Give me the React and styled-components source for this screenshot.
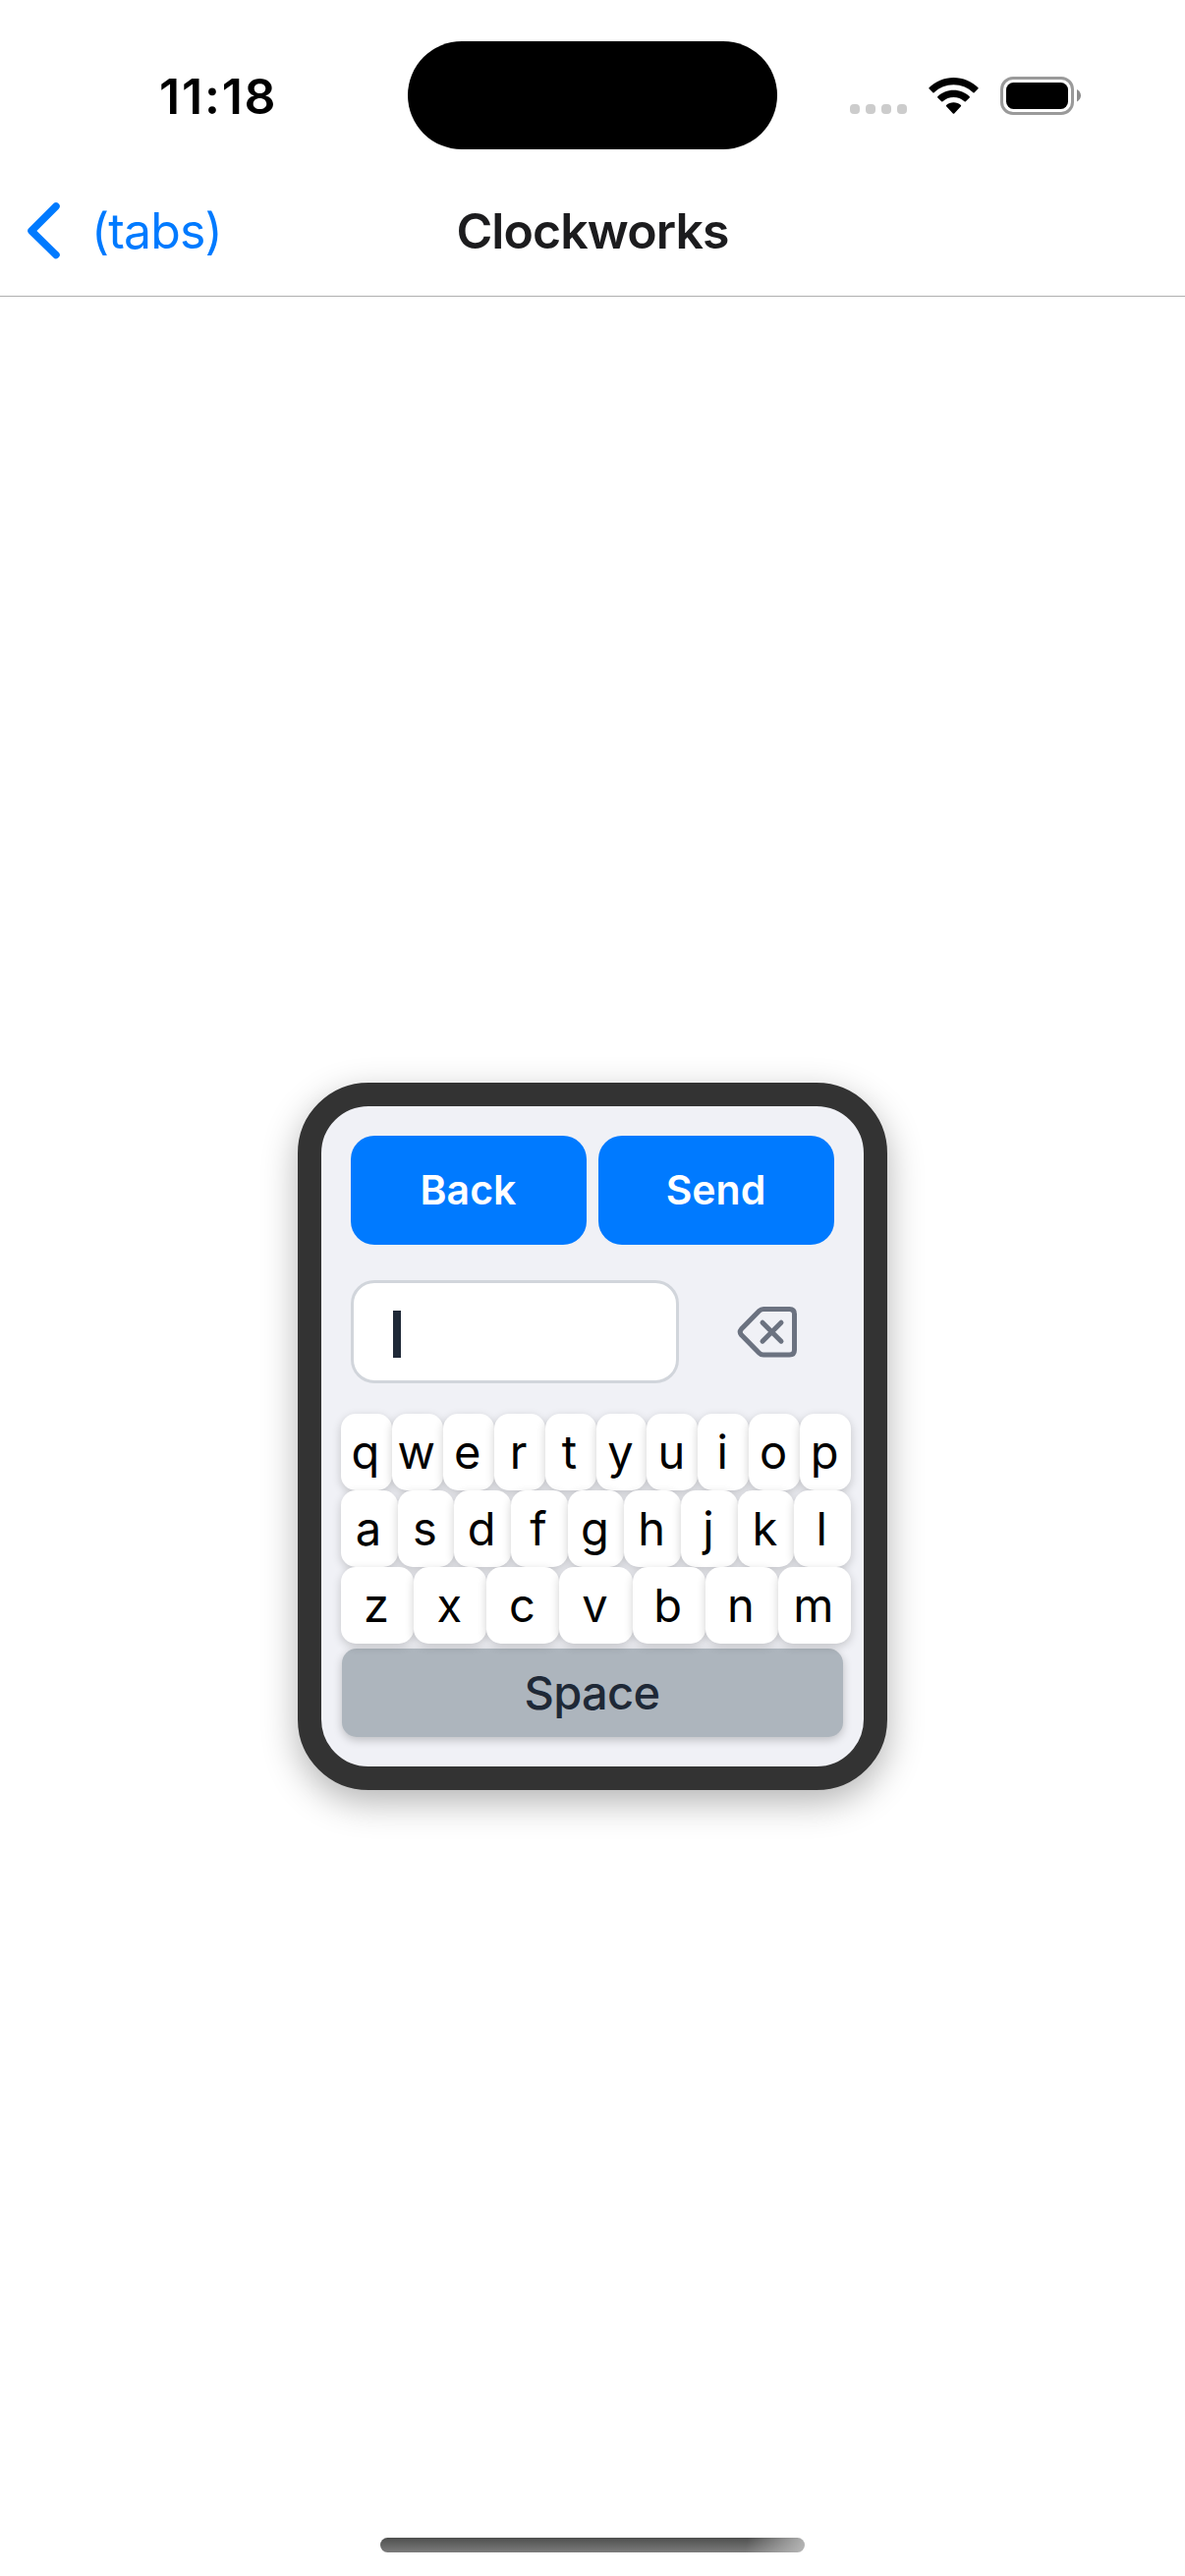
import React from "react";
import styled, { createGlobalStyle } from "styled-components";

const Global = createGlobalStyle`
  * { box-sizing: border-box; }
  html, body, #root { margin: 0; padding: 0; height: 100%; }
  body { background: #fff; font-family: Inter, "Liberation Sans", sans-serif; overflow: hidden; }
  button { border: 0; margin: 0; padding: 0; font: inherit; background: none; }
`;

const Screen = styled.div`
  width: 1206px;
  height: 2622px;
  display: flex;
  flex-direction: column;
  background: #fff;
`;

const StatusBar = styled.header`
  height: 177px;
  padding-top: 42px;
  display: grid;
  grid-template-columns: 415px 376px 1fr;
  align-items: start;
`;

const Time = styled.time`
  padding: 25px 0 0 162px;
  font-size: 50px;
  line-height: 62px;
  font-weight: 600;
  letter-spacing: 1.8px;
  color: #000;
`;

const Island = styled.div`
  height: 110px;
  border-radius: 55px;
  background: #000;
`;

const Indicators = styled.div`
  display: flex;
  align-items: flex-start;
  padding: 36px 0 0 74px;
`;

const Dots = styled.div`
  display: flex;
  gap: 6px;
  margin: 28px 22px 0 0;
`;

const Dot = styled.i`
  width: 10px;
  height: 10px;
  border-radius: 4px;
  background: #ccc;
`;

const WifiGlyph = styled.svg`
  width: 51px;
  height: 37px;
  margin: 1px 22px 0 0;
`;

const BatteryGlyph = styled.svg`
  width: 83px;
  height: 39px;
`;

const NavBar = styled.nav`
  height: 125px;
  border-bottom: 1px solid #b0b0b0;
  display: grid;
  grid-template-columns: 1fr auto 1fr;
  align-items: start;
`;

const BackLink = styled.button`
  display: flex;
  align-items: flex-start;
  padding: 28px 0 0 27px;
  gap: 31px;
  color: #007aff;
  font-size: 50px;
  line-height: 60px;
  letter-spacing: -0.9px;
`;

const Chevron = styled.svg`
  width: 35px;
  height: 60px;
`;

const Title = styled.h1`
  margin: 28px 0 0;
  font-size: 50px;
  line-height: 60px;
  font-weight: 600;
  letter-spacing: -0.9px;
  color: #1c1c1e;
`;

const Main = styled.main`
  flex: 1;
  display: flex;
  flex-direction: column;
  align-items: center;
  padding-top: 800px;
`;

const Watch = styled.section`
  width: 600px;
  height: 720px;
  border: 24px solid #333;
  border-radius: 72px;
  background: #f0f1f6;
  padding: 30px 12px 30px 20px;
  box-shadow: 0 12px 36px rgba(0, 0, 0, 0.3);
`;

const Actions = styled.div`
  display: flex;
  gap: 12px;
  padding-left: 10px;
`;

const Action = styled.button`
  width: 240px;
  height: 111px;
  padding: 0 1px 2px 0;
  border-radius: 24px;
  background: #007aff;
  color: #fff;
  font-size: 41px;
  font-weight: 600;
`;

const Compose = styled.div`
  display: flex;
  align-items: center;
  margin: 36px 0 31px;
  padding-left: 10px;
  gap: 59px;
`;

const Field = styled.div`
  width: 334px;
  height: 105px;
  border: 3px solid #d1d5db;
  border-radius: 24px;
  background: #fff;
  display: flex;
  align-items: center;
  padding: 5px 0 0 40px;
`;

const Caret = styled.span`
  width: 8px;
  height: 48px;
  background: #1f2937;
`;

const EraseGlyph = styled.svg`
  width: 62px;
  height: 52px;
`;

const KeyRow = styled.div`
  display: grid;
  grid-template-columns: repeat(${(p) => p.$count}, 1fr);
  width: 519px;
  height: 78px;
`;

const Key = styled.button`
  padding-right: 2px;
  border-radius: 15px;
  background: #fff;
  color: #000;
  font-size: 47px;
  line-height: 78px;
  box-shadow: 0 3px 10px rgba(0, 0, 0, 0.19);
`;

const SpaceKey = styled.button`
  display: block;
  width: 510px;
  height: 90px;
  margin: 5px 0 0 1px;
  padding: 0 1px 2px 0;
  border-radius: 15px;
  background: #adb5bd;
  color: #1f2937;
  font-size: 47px;
  font-weight: 500;
  letter-spacing: -0.7px;
  box-shadow: 0 3px 10px rgba(0, 0, 0, 0.22);
`;

const Footer = styled.footer`
  height: 39px;
  display: flex;
  justify-content: center;
`;

const HomeIndicator = styled.div`
  width: 432px;
  height: 15px;
  border-radius: 8px;
  background: linear-gradient(100deg, transparent 86%, rgba(190, 190, 190, 0.9) 100%),
    linear-gradient(#4e4f4e, #7c7c7c);
`;

const rows = ["qwertyuiop", "asdfghjkl", "zxcvbnm"];

export default function App() {
  return (
    <Screen>
      <Global />
      <StatusBar>
        <Time>11:18</Time>
        <Island />
        <Indicators>
          <Dots>
            <Dot />
            <Dot />
            <Dot />
            <Dot />
          </Dots>
          <WifiGlyph viewBox="0 0 51 37">
            <path d="M25.5 0C35 0 44 3.800 50.500 10.200Q51 10.800 50.500 11.300L46.600 15.300Q46 15.800 45.400 15.300C40 10.200 33 7.300 25.500 7.300S11 10.200 5.600 15.300Q5 15.800 4.400 15.300L.5 11.300Q0 10.800.5 10.200C7 3.800 16 0 25.500 0Z" />
            <path d="M25.500 12.700C31.800 12.700 37.500 15.200 41.700 19.200Q42.300 19.800 41.700 20.400L37.800 24.300Q37.200 24.800 36.600 24.300C33.500 21.500 29.700 20 25.500 20S17.500 21.500 14.400 24.300Q13.800 24.800 13.200 24.300L9.300 20.400Q8.700 19.800 9.300 19.200C13.500 15.200 19.200 12.700 25.500 12.700Z" />
            <path d="M25.500 25.300C28.300 25.300 30.900 26.300 32.900 28Q33.500 28.600 32.900 29.200L26.200 36.400Q25.500 37 24.800 36.400L18.100 29.200Q17.500 28.600 18.100 28C20.100 26.300 22.700 25.300 25.500 25.300Z" />
          </WifiGlyph>
          <BatteryGlyph viewBox="0 0 83 39">
            <rect x="1.500" y="1.500" width="72" height="36" rx="11.500" fill="none" stroke="#9a9a9a" strokeWidth="3" />
            <rect x="6" y="6" width="63" height="27" rx="7.500" />
            <path d="M78 13C83.300 15.500 83.300 23 78 25.500Z" fill="#8c8c8c" />
          </BatteryGlyph>
        </Indicators>
      </StatusBar>
      <NavBar>
        <BackLink>
          <Chevron viewBox="0 0 35 60" fill="none" stroke="#007aff" strokeWidth="7.500" strokeLinecap="round" strokeLinejoin="round">
            <path d="M30 5L5 30L30 54.500" />
          </Chevron>
          (tabs)
        </BackLink>
        <Title>Clockworks</Title>
      </NavBar>
      <Main>
        <Watch>
          <Actions>
            <Action>Back</Action>
            <Action>Send</Action>
          </Actions>
          <Compose>
            <Field>
              <Caret />
            </Field>
            <EraseGlyph viewBox="0 0 62 52" fill="none" stroke="#6b7280" strokeWidth="5" strokeLinecap="round" strokeLinejoin="round">
              <path d="M27 2.500H53.500Q58.500 2.500 58.500 7.500V44Q58.500 49 53.500 49H27Q24.500 49 22.700 47.200L4.500 28.800Q2 25.800 4.500 22.800L22.700 4.300Q24.500 2.500 27 2.500Z" />
              <path d="M26 16.200L45 35.200M45 16.200L26 35.200" />
            </EraseGlyph>
          </Compose>
          {rows.map((row) => (
            <KeyRow key={row} $count={row.length}>
              {[...row].map((letter) => (
                <Key key={letter}>{letter}</Key>
              ))}
            </KeyRow>
          ))}
          <SpaceKey>Space</SpaceKey>
        </Watch>
      </Main>
      <Footer>
        <HomeIndicator />
      </Footer>
    </Screen>
  );
}
